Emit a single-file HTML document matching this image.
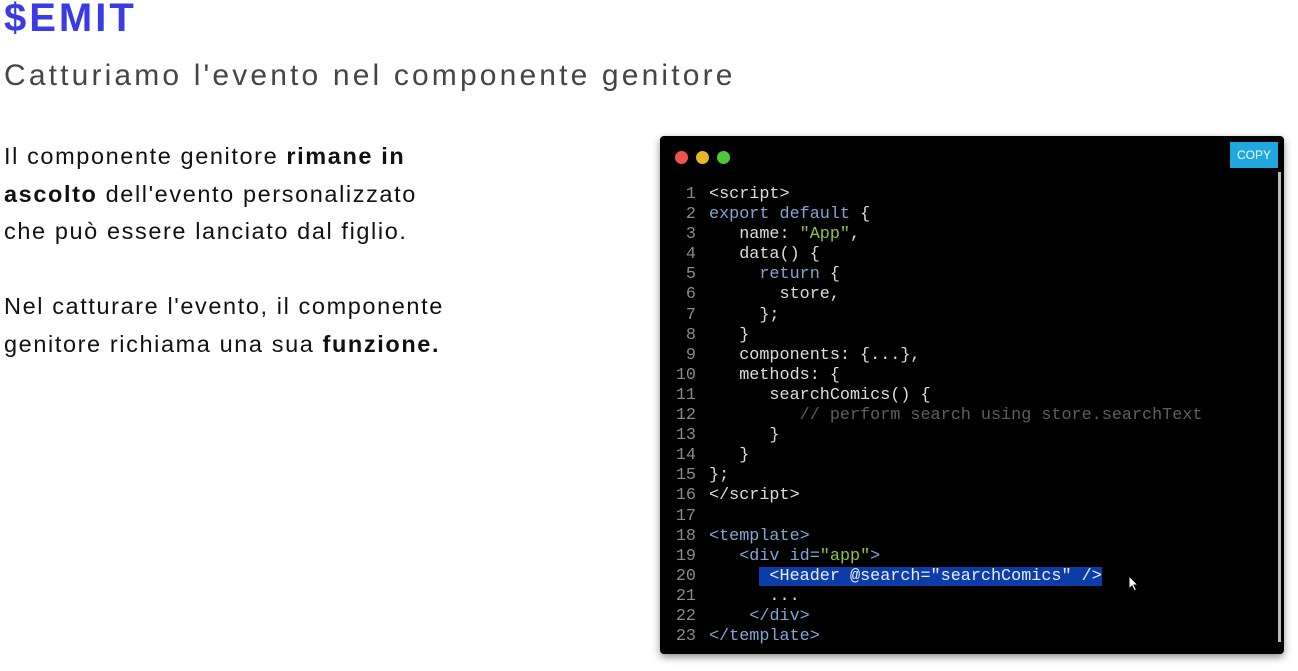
<!DOCTYPE html>
<html><head><meta charset="utf-8"><style>
html,body{margin:0;padding:0;background:#fff;width:1298px;height:671px;overflow:hidden;position:relative;font-family:"Liberation Sans",sans-serif}
.t{position:absolute;left:4px;top:-4px;font-size:40px;font-weight:bold;color:#3a3ae6;letter-spacing:3px}
.s{position:absolute;left:4px;top:59px;font-size:30px;color:#454545;letter-spacing:3.15px;white-space:nowrap}
.p{position:absolute;left:4px;font-size:23.5px;color:#111;line-height:37.5px;letter-spacing:1.6px;white-space:nowrap}
.box{position:absolute;left:660px;top:136px;width:624px;height:518px;background:#000;border-radius:4px;box-shadow:0 3px 8px rgba(0,0,0,.45);overflow:hidden}
.dot{position:absolute;top:15px;width:13px;height:13px;border-radius:50%}
.copy{position:absolute;right:6px;top:6px;width:48px;height:26px;background:#1fa7df;color:#fff;font-size:12px;line-height:26px;text-align:center}
.sb{position:absolute;right:3px;top:36px;width:3px;height:470px;background:#bbb}
pre{position:absolute;left:0;top:49px;margin:0;font-family:"Liberation Mono",monospace;font-size:16.8px;line-height:20.1px;color:#ddd}
.n{color:#8a8a8a;display:inline-block;width:36px;text-align:right;margin-right:13px}
.k{color:#82a6d4}.g{color:#8fc340}.c{color:#5f5f5f}
.hl{background:#0b3ca8;color:#e8eefc}
</style></head><body>
<div class="t">$EMIT</div>
<div class="s">Catturiamo l'evento nel componente genitore</div>
<div class="p" style="top:138px">Il componente genitore <b>rimane in</b><br><b>ascolto</b> dell'evento personalizzato<br>che può essere lanciato dal figlio.</div>
<div class="p" style="top:288px">Nel catturare l'evento, il componente<br>genitore richiama una sua <b>funzione.</b></div>
<div class="box">
<div class="dot" style="left:15px;background:#f0524f"></div>
<div class="dot" style="left:36px;background:#e6b624"></div>
<div class="dot" style="left:57px;background:#4fc73a"></div>
<div class="copy">COPY</div>
<div class="sb"></div>
<pre><span class="n">1</span>&lt;script&gt;
<span class="n">2</span><span class="k">export default</span> {
<span class="n">3</span>   name: <span class="g">"App"</span>,
<span class="n">4</span>   data() {
<span class="n">5</span>     <span class="k">return</span> {
<span class="n">6</span>       store,
<span class="n">7</span>     };
<span class="n">8</span>   }
<span class="n">9</span>   components: {...},
<span class="n">10</span>   methods: {
<span class="n">11</span>      searchComics() {
<span class="n">12</span>         <span class="c">// perform search using store.searchText</span>
<span class="n">13</span>      }
<span class="n">14</span>   }
<span class="n">15</span>};
<span class="n">16</span>&lt;/script&gt;
<span class="n">17</span>
<span class="n">18</span><span class="k">&lt;template&gt;</span>
<span class="n">19</span>   <span class="k">&lt;div id=</span><span class="g">"app"</span><span class="k">&gt;</span>
<span class="n">20</span>     <span class="hl"> &lt;Header @search="searchComics" /&gt;</span>
<span class="n">21</span>      ...
<span class="n">22</span>    <span class="k">&lt;/div&gt;</span>
<span class="n">23</span><span class="k">&lt;/template&gt;</span></pre>
<svg style="position:absolute;left:468px;top:439px" width="12" height="18" viewBox="0 0 12 18"><path d="M1 1 L1 14 L4 11 L6.5 16 L8.5 15 L6 10 L10 10 Z" fill="#fff" stroke="#000" stroke-width="1"/></svg>
</div>
</body></html>
